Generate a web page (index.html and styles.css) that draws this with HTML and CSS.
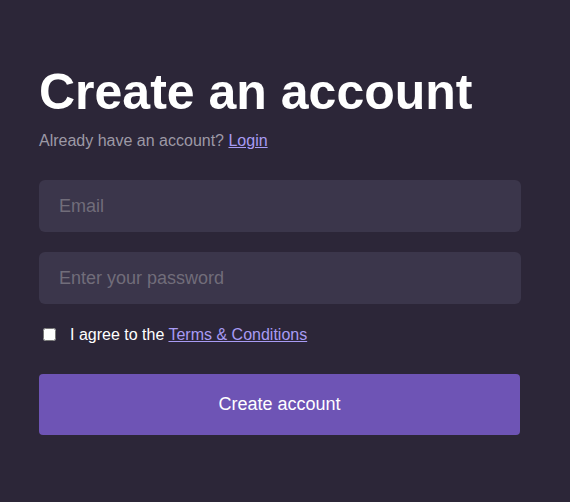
FILE: index.html
```html
<!DOCTYPE html>
<html lang="en">
<head>
<meta charset="utf-8">
<title>Create an account</title>
<link rel="stylesheet" href="styles.css">
</head>
<body>
<main class="page">
  <form class="signup">
    <h1 class="title">Create an account</h1>
    <p class="subtitle">Already have an account? <a href="#" class="link">Login</a></p>
    <input class="field" type="email" placeholder="Email">
    <input class="field" type="password" placeholder="Enter your password">
    <label class="agree">
      <input type="checkbox" class="check">
      <span>I agree to the <a href="#" class="link">Terms &amp; Conditions</a></span>
    </label>
    <button type="button" class="submit">Create account</button>
  </form>
</main>
</body>
</html>
```
FILE: styles.css
```css
html, body {
  margin: 0;
  padding: 0;
  background: #2c2638;
  font-family: "Liberation Sans", Arial, sans-serif;
}
.page {
  padding: 64px 0 0 39px;
  min-height: 502px;
  box-sizing: border-box;
}
.signup {
  width: 482px;
  display: flex;
  flex-direction: column;
}
.title {
  margin: 0;
  font-size: 50px;
  font-weight: bold;
  color: #ffffff;
  line-height: 57px;
}
.subtitle {
  margin: 11px 0 0;
  font-size: 16px;
  line-height: 18px;
  color: #9d99a6;
}
.link {
  color: #a89bf4;
  text-decoration: underline;
}
.field {
  box-sizing: border-box;
  height: 52px;
  width: 482px;
  border: none;
  border-radius: 6px;
  background: #3b364b;
  padding: 0 20px;
  font-family: inherit;
  font-size: 18px;
  color: #ffffff;
  outline: none;
}
.field::placeholder {
  color: #716d7a;
}
.subtitle + .field {
  margin-top: 30px;
}
.field + .field {
  margin-top: 20px;
}
.agree {
  display: flex;
  align-items: center;
  gap: 11px;
  margin-top: 21px;
  font-size: 16px;
  line-height: 18px;
  color: #ffffff;
}
.check {
  margin: 3px 3px 3px 4px;
  width: 13px;
  height: 13px;
}
.submit {
  margin-top: 30px;
  width: 481px;
  height: 61px;
  border: none;
  border-radius: 4px;
  background: #6e54b5;
  color: #ffffff;
  font-family: inherit;
  font-size: 18px;
}
```
